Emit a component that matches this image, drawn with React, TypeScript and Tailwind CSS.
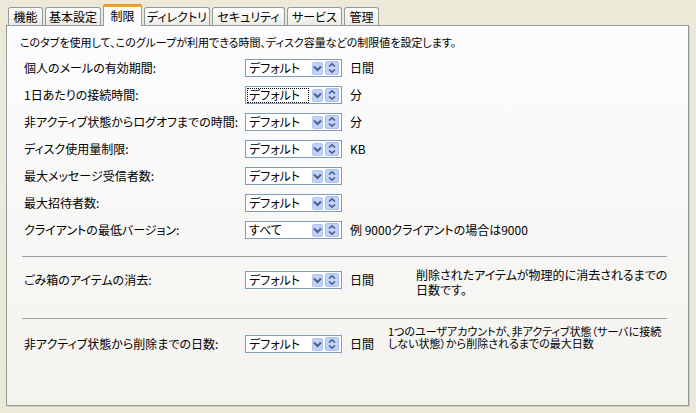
import React from "react";

const font = "font-['Noto_Sans_CJK_JP','Noto_Sans',sans-serif] [font-feature-settings:'palt']";

function ChevronBtn() {
  return (
    <div className="w-[11px] h-[13px] rounded-[2px] bg-[#c1d2fc] border border-[#b1c5f3] flex items-center justify-center">
      <svg width="9" height="7" viewBox="0 0 9 7">
        <path d="M1 1.5 L4.5 5 L8 1.5" stroke="#4d6185" strokeWidth="2" fill="none" />
      </svg>
    </div>
  );
}

function SpinBtn() {
  return (
    <div className="w-[14px] h-[14px] rounded-[2px] bg-[#c1d2fc] border border-[#a9bde8] flex flex-col items-center justify-center gap-[2px]">
      <svg width="8" height="4" viewBox="0 0 8 4">
        <path d="M1 3.5 L4 0.8 L7 3.5" stroke="#4d6185" strokeWidth="1.6" fill="none" />
      </svg>
      <svg width="8" height="4" viewBox="0 0 8 4">
        <path d="M1 0.5 L4 3.2 L7 0.5" stroke="#4d6185" strokeWidth="1.6" fill="none" />
      </svg>
    </div>
  );
}

function Select({ value, focus }: { value: string; focus?: boolean }) {
  return (
    <div className="w-[97px] h-[18px] shrink-0 border border-[#7f9db9] bg-white flex items-center pl-[1px] pr-[2px]">
      <div className="flex-1 flex items-center h-[16px]">
        <span
          className={
            focus
              ? "h-[15px] w-[62px] flex items-center pl-[1px] border border-dotted border-black leading-none text-[12px]"
              : "pl-[2px] leading-none text-[12px]"
          }
        >
          {value}
        </span>
      </div>
      <div className="flex items-center gap-[2px]">
        <ChevronBtn />
        <SpinBtn />
      </div>
    </div>
  );
}

function Row({ label, value = "デフォルト", unit, focus }: { label: string; value?: string; unit?: string; focus?: boolean }) {
  return (
    <div className="h-[27px] flex items-start">
      <div className="w-[221px] h-[18px] flex items-center text-[12px] whitespace-nowrap">{label}</div>
      <Select value={value} focus={focus} />
      {unit && <div className="h-[18px] flex items-center pl-[8px] text-[12px] whitespace-nowrap">{unit}</div>}
    </div>
  );
}

const tabs = [
  { t: "機能", w: 35 },
  { t: "基本設定", w: 56 },
  { t: "制限", w: 39, sel: true },
  { t: "ディレクトリ", w: 66 },
  { t: "セキュリティ", w: 73 },
  { t: "サービス", w: 55 },
  { t: "管理", w: 35 },
];

export default function App() {
  return (
    <div className={`w-[696px] h-[413px] bg-[#ece9d8] text-black ${font}`}>
      <div className="h-[25px] flex items-end pl-[8px] gap-[2px]">
        {tabs.map((tab) =>
          tab.sel ? (
            <div
              key={tab.t}
              style={{ width: tab.w }}
              className="relative z-10 -mb-[1px] h-[22px] bg-[#fcfcfe] border border-b-0 border-[#919b9c] rounded-t-[3px] flex flex-col text-[12px]"
            >
              <div className="h-[3px] -mx-[1px] -mt-[1px] rounded-t-[3px] bg-[#f5a623] border-t border-[#e68b2c]" />
              <div className="flex-1 flex items-center justify-center pb-[1px]">{tab.t}</div>
            </div>
          ) : (
            <div
              key={tab.t}
              style={{ width: tab.w }}
              className="h-[18px] bg-gradient-to-b from-white to-[#ecebe5] border border-b-0 border-[#919b9c] rounded-t-[3px] flex items-center justify-center text-[12px] whitespace-nowrap"
            >
              {tab.t}
            </div>
          )
        )}
      </div>
      <div className="ml-[6px] w-[683px] h-[381px] border border-[#919b9c] bg-gradient-to-b from-[#fcfcfe] to-[#f4f3ee] shadow-[1px_1px_0_#d0cebf]">
        <div className="pt-[10px] pl-[13px] text-[11px] leading-[13px] whitespace-nowrap">
          このタブを使用して、このグループが利用できる時間、ディスク容量などの制限値を設定します。
        </div>
        <div className="mt-[10px] pl-[17px]">
          <Row label="個人のメールの有効期間:" unit="日間" />
          <Row label="1日あたりの接続時間:" unit="分" focus />
          <Row label="非アクティブ状態からログオフまでの時間:" unit="分" />
          <Row label="ディスク使用量制限:" unit="KB" />
          <Row label="最大メッセージ受信者数:" />
          <Row label="最大招待者数:" />
          <Row label="クライアントの最低バージョン:" value="すべて" unit="例 9000クライアントの場合は9000" />
        </div>
        <div className="mt-[8px] ml-[15px] w-[645px] h-px bg-[#a0a0a0]" />
        <div className="mt-[10px] pl-[17px] flex items-start h-[30px]">
          <div className="mt-[4px] flex items-start">
            <div className="w-[221px] h-[18px] flex items-center text-[12px]">ごみ箱のアイテムの消去:</div>
            <Select value="デフォルト" />
            <div className="h-[18px] flex items-center pl-[8px] text-[12px]">日間</div>
          </div>
          <div className="ml-[42px] text-[12px] whitespace-nowrap flex flex-col">
            <div className="h-[15px] leading-[15px]">削除されたアイテムが物理的に消去されるまでの</div>
            <div className="h-[15px] leading-[15px]">日数です。</div>
          </div>
        </div>
        <div className="mt-[21px] ml-[15px] w-[645px] h-px bg-[#a0a0a0]" />
        <div className="mt-[6px] pl-[17px] flex items-start">
          <div className="mt-[10px] flex items-start">
            <div className="w-[221px] h-[18px] flex items-center text-[12px]">非アクティブ状態から削除までの日数:</div>
            <Select value="デフォルト" />
            <div className="h-[18px] flex items-center pl-[8px] text-[12px]">日間</div>
          </div>
          <div className="ml-[14px] text-[11px] whitespace-nowrap flex flex-col">
            <div className="h-[12px] leading-[12px]">1つのユーザアカウントが、非アクティブ状態（サーバに接続</div>
            <div className="h-[12px] leading-[12px]">しない状態）から削除されるまでの最大日数</div>
          </div>
        </div>
      </div>
    </div>
  );
}
